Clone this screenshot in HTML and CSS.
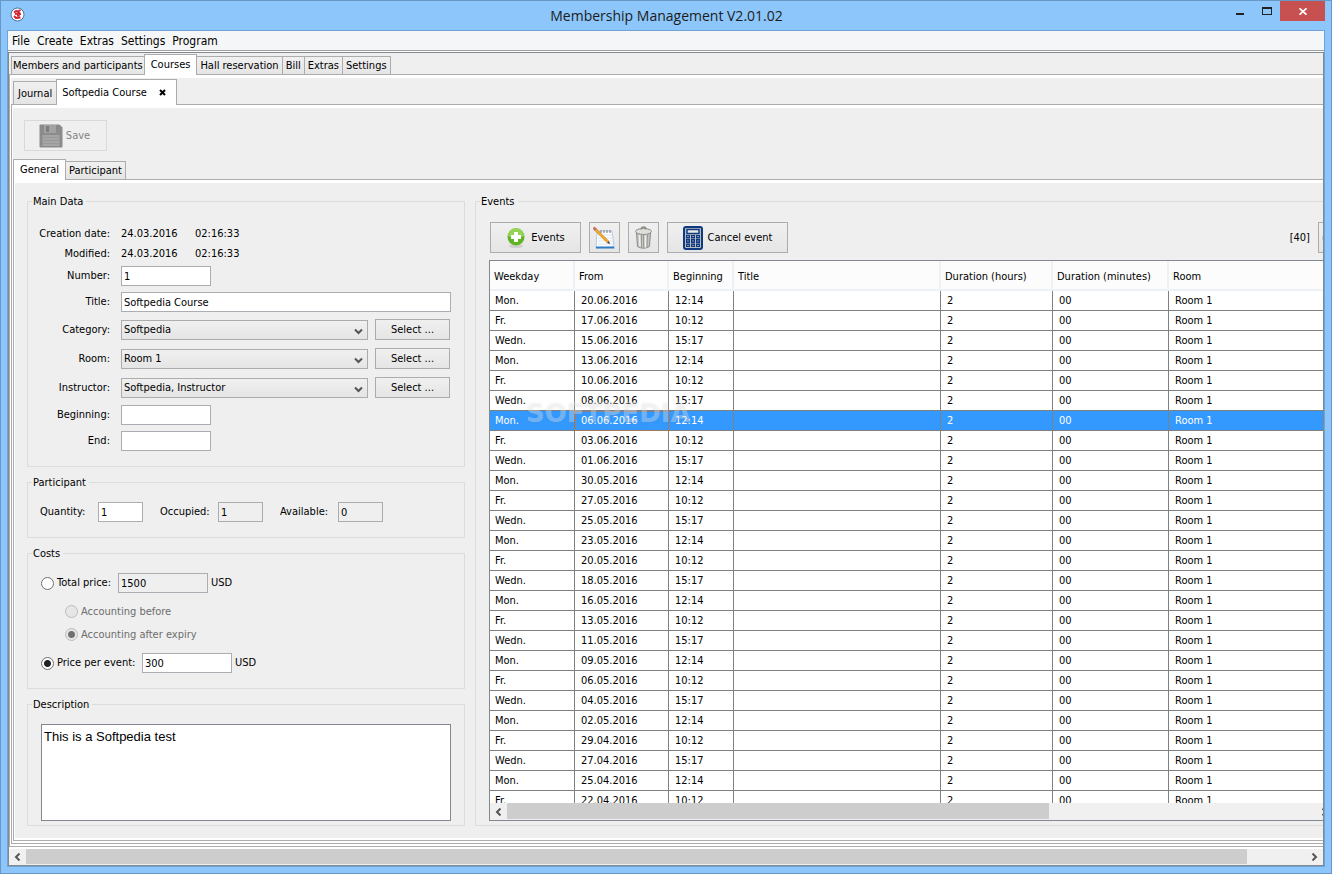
FILE: index.html
```html
<!DOCTYPE html>
<html lang="en">
<head>
<meta charset="utf-8">
<title>Membership Management V2.01.02</title>
<link rel="stylesheet" href="styles.css">
</head>
<body>
<div class="window">
	<header class="titlebar">
		<svg class="appicon" width="15" height="15" viewBox="0 0 15 15">
			<circle cx="7.5" cy="7.5" r="6.5" fill="#fff" stroke="#4f7296" stroke-width="1"/>
			<path d="M4 5.5L6 4M5.5 3.5L8 4.5L10.5 3M5 7L9.5 6L10.5 8M4 9L6 11L10.500 10.500M7 8.500H9.500" fill="none" stroke="#d3202e" stroke-width="1.800"/>
		</svg>
		<h1 class="title">Membership Management V2.01.02</h1>
		<div class="controls">
			<button class="ctl" aria-label="Minimize"><svg width="10" height="10" viewBox="0 0 10 10"><rect x="1" y="7" width="8" height="2" fill="#222"/></svg></button>
			<button class="ctl" aria-label="Maximize"><svg width="10" height="8" viewBox="0 0 10 8"><path d="M0 0H10V8H0Z M1 2V7H9V2Z" fill="#222" fill-rule="evenodd"/></svg></button>
			<button class="ctl close" aria-label="Close"><svg width="8" height="7" viewBox="0 0 8 7"><path d="M0.5 0.3L7.5 6.7M7.5 0.3L0.5 6.7" stroke="#fff" stroke-width="1.7"/></svg></button>
		</div>
	</header>

	<div class="client">
		<nav class="menubar">
			<a href="#">File</a>
			<a href="#">Create</a>
			<a href="#">Extras</a>
			<a href="#">Settings</a>
			<a href="#">Program</a>
		</nav>

		<div class="scrollpane">
			<div class="workspace">
				<div class="tabs tabs-main">
					<button class="tab">Members and participants</button>
					<button class="tab active">Courses</button>
					<button class="tab">Hall reservation</button>
					<button class="tab">Bill</button>
					<button class="tab">Extras</button>
					<button class="tab">Settings</button>
				</div>
				<div class="pane">
					<div class="tabs tabs-course">
						<button class="tab">Journal</button>
						<button class="tab active">Softpedia Course
							<svg width="7" height="7" viewBox="0 0 7 7"><path d="M1 1L6 6M6 1L1 6" stroke="#000" stroke-width="2"/></svg>
						</button>
					</div>
					<div class="pane">
						<div class="savebar">
							<button class="btn save" disabled>
								<svg width="24" height="24" viewBox="0 0 24 24">
									<path d="M1 0.5H20.5L23.5 3.5V22.5Q23.5 23.5 22.5 23.5H1.5Q0.5 23.5 0.5 22.5V1Z" fill="#8b8b8b"/>
									<rect x="5" y="1" width="12" height="8" fill="#a2a2a2"/>
									<rect x="7" y="2" width="3" height="6" fill="#7d7d7d"/>
									<rect x="3.5" y="11" width="17" height="11" fill="#a5a5a5"/>
									<path d="M4 13.5H20M4 16.5H20M4 19.5H20" stroke="#999"/>
								</svg>
								Save
							</button>
						</div>
						<div class="tabs tabs-detail">
							<button class="tab active">General</button>
							<button class="tab">Participant</button>
						</div>
						<div class="pane">
							<div class="detail">

								<form class="left">
									<fieldset class="maindata">
										<legend>Main Data</legend>
										<div class="row text"><span class="lbl">Creation date:</span><span class="date">24.03.2016</span><span>02:16:33</span></div>
										<div class="row text"><span class="lbl">Modified:</span><span class="date">24.03.2016</span><span>02:16:33</span></div>
										<div class="row"><label class="lbl" for="number">Number:</label><input class="field" id="number" type="text" value="1"></div>
										<div class="row"><label class="lbl" for="title">Title:</label><input class="field wide" id="title" type="text" value="Softpedia Course"></div>
										<div class="row pick">
											<label class="lbl" for="category">Category:</label>
											<div class="combo"><select id="category"><option>Softpedia</option></select><svg width="9" height="7" viewBox="0 0 9 7"><path d="M1 1.5L4.5 5L8 1.5" fill="none" stroke="#555" stroke-width="2"/></svg></div>
											<button type="button" class="btn select">Select ...</button>
										</div>
										<div class="row pick">
											<label class="lbl" for="room">Room:</label>
											<div class="combo"><select id="room"><option>Room 1</option></select><svg width="9" height="7" viewBox="0 0 9 7"><path d="M1 1.5L4.5 5L8 1.5" fill="none" stroke="#555" stroke-width="2"/></svg></div>
											<button type="button" class="btn select">Select ...</button>
										</div>
										<div class="row pick">
											<label class="lbl" for="instructor">Instructor:</label>
											<div class="combo"><select id="instructor"><option>Softpedia, Instructor</option></select><svg width="9" height="7" viewBox="0 0 9 7"><path d="M1 1.5L4.5 5L8 1.5" fill="none" stroke="#555" stroke-width="2"/></svg></div>
											<button type="button" class="btn select">Select ...</button>
										</div>
										<div class="row"><label class="lbl" for="beginning">Beginning:</label><input class="field" id="beginning" type="text"></div>
										<div class="row"><label class="lbl" for="end">End:</label><input class="field" id="end" type="text"></div>
									</fieldset>

									<fieldset>
										<legend>Participant</legend>
										<div class="counts">
											<label for="quantity">Quantity:</label><input class="field small" id="quantity" type="text" value="1">
											<label for="occupied">Occupied:</label><input class="field small" id="occupied" type="text" value="1" readonly>
											<label for="available">Available:</label><input class="field small" id="available" type="text" value="0" readonly>
										</div>
									</fieldset>

									<fieldset>
										<legend>Costs</legend>
										<div class="price">
											<input type="radio" name="price" id="total"><label class="total" for="total">Total price:</label>
											<input class="field" type="text" value="1500" aria-label="Total price amount" readonly><span class="unit">USD</span>
										</div>
										<div class="accounting">
											<div class="option"><input type="radio" name="acc" id="before" disabled><label for="before">Accounting before</label></div>
											<div class="option"><input type="radio" name="acc" id="after" checked disabled><label for="after">Accounting after expiry</label></div>
										</div>
										<div class="price">
											<input type="radio" name="price" id="perevent" checked><label class="perevent" for="perevent">Price per event:</label>
											<input class="field" type="text" value="300" aria-label="Price per event amount"><span class="unit">USD</span>
										</div>
									</fieldset>

									<fieldset class="description">
										<legend>Description</legend>
										<textarea aria-label="Description">This is a Softpedia test</textarea>
									</fieldset>
								</form>

								<fieldset class="events">
									<legend>Events</legend>
									<div class="toolbar">
										<button class="btn add">
											<svg width="20" height="22" viewBox="0 0 20 22">
												<ellipse cx="10" cy="19" rx="7" ry="2" fill="#cfcfcf"/>
												<circle cx="10" cy="10" r="8.5" fill="#62b522"/>
												<path d="M2 9A8 8 0 0 1 18 9Q10 13 2 9Z" fill="#93d455"/>
												<path d="M10 5V15M5 10H15" stroke="#fff" stroke-width="4"/>
											</svg>
											Events
										</button>
										<button class="btn icon" aria-label="Edit">
											<svg width="23" height="24" viewBox="0 0 23 24">
												<path d="M4 5L19 5L21 21L3 22Z" fill="#fafcff" stroke="#b6cbe0"/>
												<path d="M3 20.500H21L21.500 22.500H3Z" fill="#2b7cc4"/>
												<path d="M5 9H19M5 12H20M5 15H20M5 18H20" stroke="#e0e6ee"/>
												<path d="M8 4V7M11 4V7M14 4V7M17 4V7" stroke="#777"/>
												<path d="M2 3L15 16" stroke="#c77d18" stroke-width="2.600"/>
												<path d="M2 3L15 16" stroke="#f9b932" stroke-width="1.400"/>
												<path d="M0.500 1.500L3 4" stroke="#cc7262" stroke-width="2.800"/>
												<path d="M14 17L17 18L16 15Z" fill="#533"/>
											</svg>
										</button>
										<button class="btn icon" aria-label="Delete">
											<svg width="19" height="23" viewBox="0 0 19 23">
												<path d="M2.500 6.500L3.500 20.500Q9.500 24 15.500 20.500L16.500 6.500Z" fill="#c4c4c0" stroke="#8b8b87"/>
												<path d="M5.500 9L6 20.500M11.500 9.500V21.500" stroke="#f0f0ee" stroke-width="1.500"/>
												<path d="M7.500 9V21.500M9.500 9V21.500M13.500 9L13 21" stroke="#9a9a95"/>
												<ellipse cx="9.500" cy="5.500" rx="8" ry="3" fill="#dededb" stroke="#8b8b87"/>
												<path d="M7 3.500Q7 1 9.500 1T12 3.500" fill="none" stroke="#8b8b87" stroke-width="1.300"/>
											</svg>
										</button>
										<button class="btn cancel">
											<svg width="20" height="24" viewBox="0 0 20 24">
												<rect x="1" y="1" width="18" height="22" rx="2" fill="#bdbdbd" stroke="#0d3a80" stroke-width="2"/>
												<rect x="4" y="3.500" width="12" height="4" fill="#e8e8e8" stroke="#0d3a80" stroke-width="1.500"/>
												<path d="M3 9H7V12.500H3ZM8 9H12V12.500H8ZM13 9H17V12.500H13ZM3 13H7V17H3ZM8 13H12V17H8ZM13 13H17V17H13ZM3 17.500H7V21H3ZM8 17.500H12V21H8ZM13 17.500H17V21H13Z" fill="#0d3a80"/>
												<path d="M4 10.500H6M9 10.500H11M14 10.500H16M4 15H6M9 15H11M14 15H16M4 19.500H6M9 19.500H11M14 19.500H16" stroke="#8194b8"/>
											</svg>
											Cancel event
										</button>
										<span class="count">[40]</span>
										<button class="btn prev" aria-label="Previous page" disabled><svg width="8" height="8" viewBox="0 0 8 8"><path d="M0 2H8V6H0Z" fill="#ccc"/></svg></button>
									</div>
									<div class="tablebox">
										<div class="tableview">
											<table>
												<colgroup><col class="c-day"><col class="c-from"><col class="c-begin"><col class="c-title"><col class="c-hours"><col class="c-min"><col></colgroup>
												<thead>
													<tr><th>Weekday</th><th>From</th><th>Beginning</th><th>Title</th><th>Duration (hours)</th><th>Duration (minutes)</th><th>Room</th></tr>
												</thead>
												<tbody>
													<tr><td>Mon.</td><td>20.06.2016</td><td>12:14</td><td></td><td>2</td><td>00</td><td>Room 1</td></tr>
													<tr><td>Fr.</td><td>17.06.2016</td><td>10:12</td><td></td><td>2</td><td>00</td><td>Room 1</td></tr>
													<tr><td>Wedn.</td><td>15.06.2016</td><td>15:17</td><td></td><td>2</td><td>00</td><td>Room 1</td></tr>
													<tr><td>Mon.</td><td>13.06.2016</td><td>12:14</td><td></td><td>2</td><td>00</td><td>Room 1</td></tr>
													<tr><td>Fr.</td><td>10.06.2016</td><td>10:12</td><td></td><td>2</td><td>00</td><td>Room 1</td></tr>
													<tr><td>Wedn.</td><td>08.06.2016</td><td>15:17</td><td></td><td>2</td><td>00</td><td>Room 1</td></tr>
													<tr class="selected"><td>Mon.</td><td class="focus">06.06.2016</td><td>12:14</td><td></td><td>2</td><td>00</td><td>Room 1</td></tr>
													<tr><td>Fr.</td><td>03.06.2016</td><td>10:12</td><td></td><td>2</td><td>00</td><td>Room 1</td></tr>
													<tr><td>Wedn.</td><td>01.06.2016</td><td>15:17</td><td></td><td>2</td><td>00</td><td>Room 1</td></tr>
													<tr><td>Mon.</td><td>30.05.2016</td><td>12:14</td><td></td><td>2</td><td>00</td><td>Room 1</td></tr>
													<tr><td>Fr.</td><td>27.05.2016</td><td>10:12</td><td></td><td>2</td><td>00</td><td>Room 1</td></tr>
													<tr><td>Wedn.</td><td>25.05.2016</td><td>15:17</td><td></td><td>2</td><td>00</td><td>Room 1</td></tr>
													<tr><td>Mon.</td><td>23.05.2016</td><td>12:14</td><td></td><td>2</td><td>00</td><td>Room 1</td></tr>
													<tr><td>Fr.</td><td>20.05.2016</td><td>10:12</td><td></td><td>2</td><td>00</td><td>Room 1</td></tr>
													<tr><td>Wedn.</td><td>18.05.2016</td><td>15:17</td><td></td><td>2</td><td>00</td><td>Room 1</td></tr>
													<tr><td>Mon.</td><td>16.05.2016</td><td>12:14</td><td></td><td>2</td><td>00</td><td>Room 1</td></tr>
													<tr><td>Fr.</td><td>13.05.2016</td><td>10:12</td><td></td><td>2</td><td>00</td><td>Room 1</td></tr>
													<tr><td>Wedn.</td><td>11.05.2016</td><td>15:17</td><td></td><td>2</td><td>00</td><td>Room 1</td></tr>
													<tr><td>Mon.</td><td>09.05.2016</td><td>12:14</td><td></td><td>2</td><td>00</td><td>Room 1</td></tr>
													<tr><td>Fr.</td><td>06.05.2016</td><td>10:12</td><td></td><td>2</td><td>00</td><td>Room 1</td></tr>
													<tr><td>Wedn.</td><td>04.05.2016</td><td>15:17</td><td></td><td>2</td><td>00</td><td>Room 1</td></tr>
													<tr><td>Mon.</td><td>02.05.2016</td><td>12:14</td><td></td><td>2</td><td>00</td><td>Room 1</td></tr>
													<tr><td>Fr.</td><td>29.04.2016</td><td>10:12</td><td></td><td>2</td><td>00</td><td>Room 1</td></tr>
													<tr><td>Wedn.</td><td>27.04.2016</td><td>15:17</td><td></td><td>2</td><td>00</td><td>Room 1</td></tr>
													<tr><td>Mon.</td><td>25.04.2016</td><td>12:14</td><td></td><td>2</td><td>00</td><td>Room 1</td></tr>
													<tr><td>Fr.</td><td>22.04.2016</td><td>10:12</td><td></td><td>2</td><td>00</td><td>Room 1</td></tr>
												</tbody>
											</table>
											<span class="watermark">SOFTPEDIA</span>
										</div>
										<div class="hscroll table-scroll">
											<button aria-label="Scroll left"><svg width="7" height="8" viewBox="0 0 7 8"><path d="M5.500 0.500L2 4L5.500 7.500" fill="none" stroke="#555" stroke-width="2"/></svg></button>
											<div class="track"><div class="thumb"></div></div>
											<button aria-label="Scroll right"><svg width="7" height="8" viewBox="0 0 7 8"><path d="M1.500 0.500L5 4L1.500 7.500" fill="none" stroke="#555" stroke-width="2"/></svg></button>
										</div>
									</div>
								</fieldset>

							</div>
						</div>
					</div>
				</div>
			</div>
			<div class="hscroll page-scroll">
				<button aria-label="Scroll left"><svg width="7" height="8" viewBox="0 0 7 8"><path d="M5.500 0.500L2 4L5.500 7.500" fill="none" stroke="#555" stroke-width="2"/></svg></button>
				<div class="track"><div class="thumb"></div></div>
				<button aria-label="Scroll right"><svg width="7" height="8" viewBox="0 0 7 8"><path d="M1.500 0.500L5 4L1.500 7.500" fill="none" stroke="#555" stroke-width="2"/></svg></button>
			</div>
		</div>
	</div>
</div>
</body>
</html>
```
FILE: styles.css
```css
* {
	box-sizing: border-box;
}
body {
	margin: 0;
	font: 11px/14px "DejaVu Sans Condensed", "DejaVu Sans", sans-serif;
	color: #000;
}
button, input, select {
	font: inherit;
	color: inherit;
	margin: 0;
	padding: 0;
}
svg {
	display: block;
	flex: none;
}

/* window frame */
.window {
	height: 100vh;
	display: flex;
	flex-direction: column;
	border: 1px solid #6a98c4;
	background: #8cc6fa;
}
.titlebar {
	height: 29px;
	flex: none;
	display: grid;
	grid-template-columns: 1fr auto 1fr;
	padding: 0 8px 0 9px;
}
.appicon {
	margin-top: 6px;
}
.title {
	margin: 0;
	font: 14px/29px "Open Sans", "Noto Sans", sans-serif;
	color: #1c1c1c;
}
.controls {
	display: flex;
	justify-content: flex-end;
	align-items: flex-start;
	margin-right: -2px;
}
.ctl {
	width: 27px;
	height: 20px;
	border: 0;
	background: none;
	display: flex;
	align-items: center;
	justify-content: center;
}
.ctl.close {
	width: 45px;
	background: #c75050;
}
.client {
	flex: 1;
	min-height: 0;
	margin: 0 6px 6px;
	border: 1px solid #6fa3d6;
	background: #fff;
	display: flex;
	flex-direction: column;
}
.menubar {
	flex: none;
	height: 20px;
	display: flex;
	align-items: center;
	gap: 7px;
	padding-left: 4px;
	margin-bottom: 1px;
	border-bottom: 1px solid #a0a0a0;
	background: #f5f6f7;
	font-size: 12px;
}
.menubar a {
	color: inherit;
	text-decoration: none;
}
.scrollpane {
	flex: 1;
	min-height: 0;
	display: flex;
	flex-direction: column;
	overflow: hidden;
	border: 1px solid #828790;
}
.workspace {
	flex: 1;
	min-height: 0;
	min-width: 1357px;
	display: flex;
	flex-direction: column;
	margin-bottom: 2px;
	background: #efefef;
}

/* tabs */
.tabs {
	flex: none;
	display: flex;
	align-items: flex-end;
	background: #efefef;
}
.tab {
	height: 18px;
	padding: 1px 3px 0;
	margin-right: -1px;
	border: 1px solid #acacac;
	border-bottom: 0;
	background: linear-gradient(#f0f0f0, #e5e5e5);
	white-space: nowrap;
}
.tab.active {
	position: relative;
	display: flex;
	justify-content: space-between;
	height: 21px;
	padding: 3px 6px 0;
	margin-bottom: -1px;
	background: #fff;
}
.tabs-main {
	height: 21px;
	padding-left: 2px;
}
.tabs-main .tab:first-child {
	padding: 1px 1px 0;
}
.tabs-course {
	height: 26px;
	padding-left: 2px;
}
.tabs-course .tab {
	height: 23px;
	padding: 1px 4px 0;
}
.tabs-course .tab.active {
	width: 121px;
	height: 26px;
	padding: 6px 10px 0 5px;
}
.tabs-course svg {
	margin-top: 3px;
}
.tabs-detail {
	height: 20px;
}
.pane {
	flex: 1;
	min-height: 0;
	display: flex;
	flex-direction: column;
	padding: 3px 1px 2px;
	border: 1px solid #acacac;
	background: #fff;
}

/* buttons and fields */
.btn {
	height: 31px;
	display: flex;
	align-items: center;
	justify-content: center;
	gap: 5px;
	border: 1px solid #acacac;
	background: linear-gradient(#f0f0f0, #e5e5e5);
	white-space: nowrap;
}
.savebar {
	flex: none;
	padding: 12px 11px 8px;
	background: #efefef;
}
.btn.save {
	width: 83px;
	gap: 3px;
	padding-right: 2px;
	border-color: #d9d9d9;
	background: #efefef;
	color: #838383;
}
.field {
	width: 90px;
	height: 20px;
	padding: 0 2px;
	border: 1px solid #abadb3;
	border-radius: 0;
	background: #fff;
}
.field.wide {
	width: 330px;
}
.field.small {
	width: 45px;
}
.field[readonly] {
	background: #efefef;
}

/* detail form */
.detail {
	flex: 1;
	min-height: 0;
	display: grid;
	grid-template-columns: 438px minmax(0, 1fr);
	grid-template-rows: minmax(0, 1fr);
	gap: 10px;
	padding: 11px 12px 12px;
	background: #efefef;
}
.left {
	display: flex;
	flex-direction: column;
	gap: 8px;
	min-height: 0;
}
fieldset {
	min-width: 0;
	margin: 0;
	padding: 13px 13px 15px 12px;
	border: 1px solid #dcdcdc;
}
legend {
	height: 14px;
	margin-left: -8px;
	padding: 0 3px 0 1px;
	line-height: 16px;
}
.maindata {
	padding: 15px 13px 12px 0;
}
.maindata legend {
	margin-left: 4px;
}
.row {
	height: 26px;
	display: flex;
	align-items: center;
}
.row.text {
	height: 20px;
	padding-top: 2px;
}
.row.pick {
	height: 29px;
}
.lbl {
	width: 82px;
	margin-right: 11px;
	text-align: right;
}
.date {
	width: 74px;
}
.combo {
	position: relative;
	width: 247px;
}
.combo select {
	display: block;
	width: 100%;
	height: 20px;
	padding: 0 2px;
	border: 1px solid #acacac;
	border-radius: 0;
	background: linear-gradient(#f0f0f0, #e5e5e5);
	appearance: none;
}
.combo svg {
	position: absolute;
	right: 5px;
	top: 8px;
	pointer-events: none;
}
.btn.select {
	width: 75px;
	height: 21px;
	margin-left: 7px;
}
.counts, .price, .option {
	display: flex;
	align-items: center;
}
.counts label {
	width: 58px;
}
.counts .field {
	margin-right: 17px;
}
input[type=radio] {
	appearance: none;
	width: 13px;
	height: 13px;
	margin: 0 3px 0 1px;
	border: 1px solid #707070;
	border-radius: 50%;
	background: #fff;
}
input[type=radio]:checked {
	background: radial-gradient(#222 0 3px, #fff 4px);
}
input[type=radio]:disabled {
	border-color: #bcbcbc;
	background: #e6e6e6;
}
input[type=radio]:disabled:checked {
	background: radial-gradient(#707070 0 3px, #e6e6e6 4px);
}
.total {
	width: 61px;
}
.perevent {
	width: 85px;
}
.unit {
	margin-left: 3px;
}
.accounting {
	padding: 7px 0 7px 24px;
	color: #6d6d6d;
}
.option {
	height: 23px;
}
.description {
	flex: 1;
	min-height: 0;
	display: flex;
	padding: 13px 13px 4px 13px;
}
.description legend, .events legend {
	margin-left: -9px;
}
textarea {
	flex: 1;
	padding: 4px 2px;
	border: 1px solid #828790;
	background: #fff;
	font: 13px/16px "Liberation Sans", Arial, sans-serif;
	resize: none;
}

/* events */
.events {
	min-height: 0;
	display: flex;
	flex-direction: column;
	padding: 14px 13px 4px;
}
.toolbar {
	flex: none;
	display: flex;
	align-items: center;
	gap: 8px;
	padding-left: 1px;
	margin-bottom: 7px;
}
.btn.add {
	width: 91px;
}
.btn.icon {
	width: 31px;
}
.btn.cancel {
	width: 121px;
}
.count {
	margin-left: auto;
}
.btn.prev {
	width: 16px;
}
.tablebox {
	flex: 1;
	min-height: 0;
	display: flex;
	flex-direction: column;
	border: 1px solid #828790;
	background: #fff;
}
.tableview {
	position: relative;
	flex: 1;
	min-height: 0;
	overflow: hidden;
}
table {
	width: 100%;
	table-layout: fixed;
	border-collapse: separate;
	border-spacing: 0;
}
.c-day {
	width: 85px;
}
.c-from {
	width: 94px;
}
.c-begin {
	width: 65px;
}
.c-title {
	width: 207px;
}
.c-hours {
	width: 112px;
}
.c-min {
	width: 116px;
}
th {
	height: 30px;
	padding: 3px 0 0 4px;
	border-right: 2px solid #edf1f6;
	border-bottom: 2px solid #edf1f6;
	background: #fcfcfc;
	font-weight: normal;
	text-align: left;
	white-space: nowrap;
}
td {
	height: 20px;
	padding: 0 0 0 6px;
	border-right: 1px solid #808080;
	border-bottom: 1px solid #808080;
	white-space: nowrap;
}
td:first-child {
	padding-left: 5px;
}
.selected td {
	background: #3399ff;
	color: #fff;
}
td.focus {
	outline: 1px dotted #c87137;
	outline-offset: -1px;
}
.watermark {
	position: absolute;
	left: 36px;
	top: 137px;
	font: bold 26px/30px "DejaVu Sans", sans-serif;
	color: rgba(255, 255, 255, .3);
	text-shadow: 0 1px 2px rgba(120, 120, 120, .15);
	pointer-events: none;
}

/* scroll bars */
.hscroll {
	flex: none;
	height: 17px;
	display: flex;
	background: #f0f0f0;
}
.hscroll button {
	width: 17px;
	border: 0;
	background: none;
	display: flex;
	align-items: center;
	justify-content: center;
}
.track {
	flex: 1;
	padding-bottom: 1px;
}
.thumb {
	height: 100%;
	background: #cdcdcd;
}
.table-scroll .thumb {
	width: 67%;
}
.page-scroll {
	height: 16px;
}
.page-scroll .thumb {
	width: 95.4%;
}
```
